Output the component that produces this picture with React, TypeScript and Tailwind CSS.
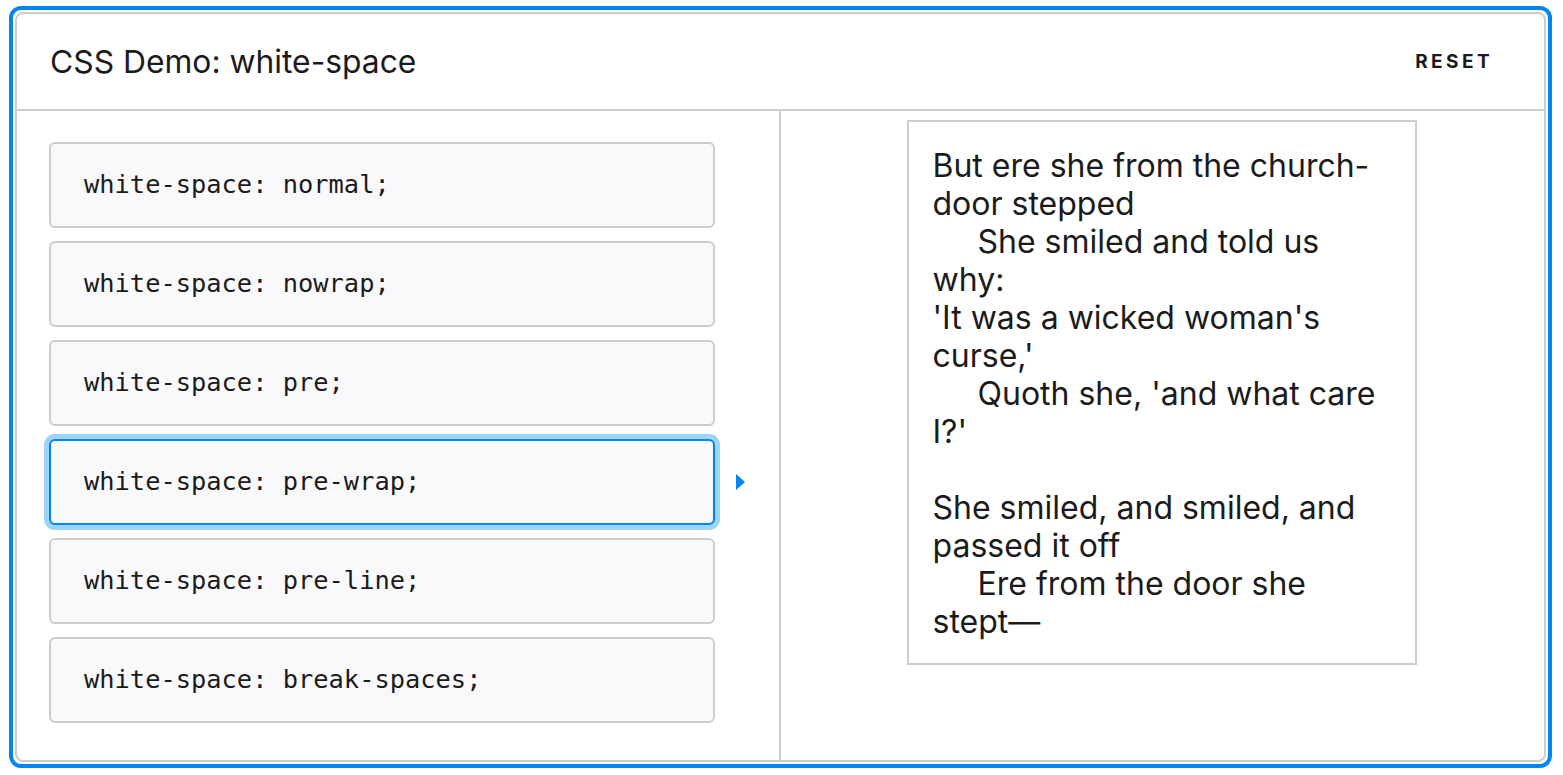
import React from "react";

const options = [
  "white-space: normal;",
  "white-space: nowrap;",
  "white-space: pre;",
  "white-space: pre-wrap;",
  "white-space: pre-line;",
  "white-space: break-spaces;",
];

const poem =
  "But ere she from the church-door stepped\n     She smiled and told us why:\n'It was a wicked woman's curse,'\n     Quoth she, 'and what care I?'\n\nShe smiled, and smiled, and passed it off\n     Ere from the door she stept\u2060\u2014";

const App = () => {
  const selected = 3;
  return (
    // outer page
    <div className="w-full h-[775px] bg-white pl-[9px] pt-[6px]">
      <div className="w-[1543px] h-[762px] border-4 border-[#0085f2] rounded-[12px] p-[2px]">
        <div className="h-full border-2 border-[#cdcdcd] rounded-[8px] flex flex-col text-[#1b1b1b]">
          {/* header */}
          <div className="h-[97px] shrink-0 border-b-2 border-[#cdcdcd] flex items-center justify-between pl-[33px] pr-[51px] font-['Inter',sans-serif]">
            <h1 className="text-[31.8px] leading-none">CSS Demo: white-space</h1>
            <button className="text-[19px] font-bold tracking-[0.18em] leading-none">RESET</button>
          </div>

          {/* body */}
          <div className="flex-1 flex">
            {/* choices */}
            <div className="w-[764px] shrink-0 border-r-2 border-[#cdcdcd] pl-[32px] pt-[31px] flex flex-col gap-[13px]">
              {options.map((o, i) => (
                <div key={o} className="flex items-center">
                  <div
                    className={
                      i === selected
                        ? "w-[666px] h-[86px] rounded-[6px] bg-[#f9f9fb] border-2 border-[#0085f2] shadow-[0_0_0_5px_#9fd4fa] flex items-center pl-[33px]"
                        : "w-[666px] h-[86px] rounded-[6px] bg-[#f9f9fb] border-2 border-[#cdcdcd] flex items-center pl-[33px]"
                    }
                  >
                    <code className="font-['DejaVu_Sans_Mono',monospace] text-[25.4px] leading-none">{o}</code>
                  </div>
                  {i === selected && (
                    <svg width="9" height="16" viewBox="0 0 9 16" className="ml-[21px]">
                      <polygon points="0,0 9,8 0,16" fill="#0085f2" />
                    </svg>
                  )}
                </div>
              ))}
            </div>

            {/* output */}
            <div className="flex-1 flex justify-center pt-[9px]">
              <div className="w-[510px] mr-[2px] h-fit border-2 border-[#cdcdcd] px-[24px] pt-[25px] pb-[22px]">
                <p className="font-['Inter',sans-serif] text-[32px] leading-[38px] whitespace-pre-wrap">{poem}</p>
              </div>
            </div>
          </div>
        </div>
      </div>
    </div>
  );
};

export default App;
